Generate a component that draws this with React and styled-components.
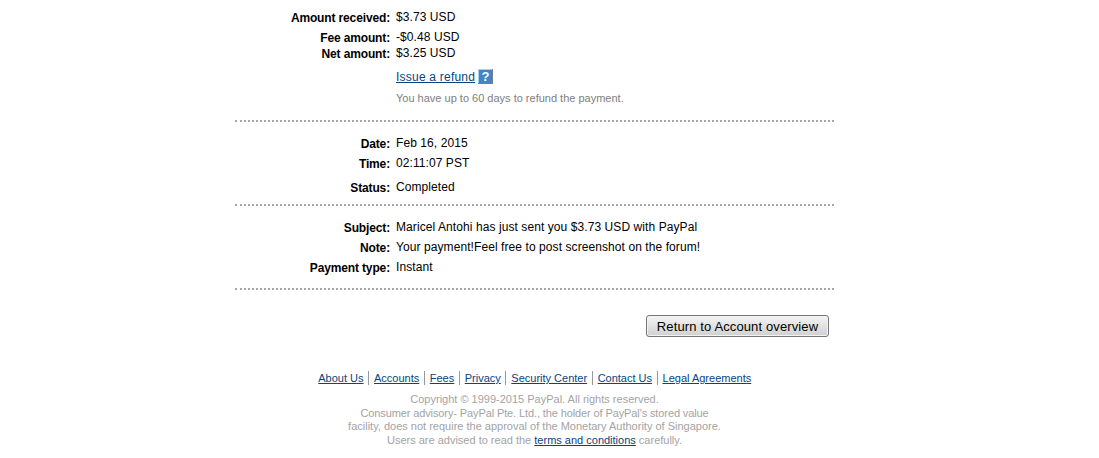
import React from 'react';
import styled, { createGlobalStyle } from 'styled-components';

const GlobalStyle = createGlobalStyle`
  html, body {
    margin: 0;
    padding: 0;
    background: #fff;
    font-family: "Liberation Sans", Arial, sans-serif;
    font-size: 12px;
    color: #000;
  }
`;

const Page = styled.div`
  width: 599px;
  margin-left: 235px;
  height: 458px;
  overflow: hidden;
`;

const Section = styled.div`
  padding-top: ${({ $top }) => $top}px;
  height: ${({ $height }) => $height}px;
  box-sizing: border-box;
  border-bottom: 2px dotted #a6a6a6;
`;

const Row = styled.div`
  display: grid;
  grid-template-columns: 155px 1fr;
  column-gap: 6px;
  height: ${({ $h }) => $h || 20}px;
  margin-top: ${({ $gap }) => $gap || 0}px;
  line-height: 14px;
`;

const Label = styled.div`
  font-weight: bold;
  text-align: right;
  padding-top: 1px;
  letter-spacing: -0.14px;
`;

const Value = styled.div`
  letter-spacing: 0.08px;
`;

const Refund = styled.a`
  display: inline-flex;
  align-items: center;
  gap: 3px;
  color: #084482;
  text-decoration: underline;
  font-size: 12px;
  letter-spacing: 0.22px;
`;

const Hint = styled.div`
  color: #808080;
  font-size: 11px;
`;

const ButtonRow = styled.div`
  display: flex;
  justify-content: flex-end;
  padding: 25px 5px 0 0;
`;

const Button = styled.button`
  width: 183px;
  height: 22px;
  padding: 0;
  border: 1px solid #777;
  border-radius: 3px;
  background: linear-gradient(#f4f4f4, #d0d0d0);
  box-shadow: inset 0 0 0 1px #f2f2f2;
  font-family: "Liberation Sans", Arial, sans-serif;
  font-size: 13px;
  letter-spacing: 0.12px;
  color: #000;
`;

const Footer = styled.div`
  margin-top: 34px;
  text-align: center;
  font-size: 11px;
  color: #a3a3a3;
`;

const FooterLinks = styled.div`
  display: flex;
  justify-content: center;
  margin-bottom: 8px;
  line-height: 14px;
`;

const FooterLink = styled.a`
  color: #084482;
  text-decoration: underline;
  padding: 0 4.5px 0 5px;
  border-left: ${({ $first }) => ($first ? 'none' : '1px solid #999')};
`;

const Legal = styled.div`
  line-height: 13.5px;
  letter-spacing: ${({ $track }) => $track || 0}px;
`;

const TermsLink = styled.a`
  color: #084482;
  text-decoration: underline;
`;

function HelpIcon() {
  return (
    <svg width="15" height="15" viewBox="0 0 15 15">
      <rect width="15" height="15" fill="#6f7f8f" />
      <rect width="14" height="14" fill="#a9cdec" />
      <rect x="1" y="1" width="13" height="13" fill="#3f86c8" />
      <text x="7.5" y="12" textAnchor="middle" fontFamily="Liberation Sans" fontWeight="bold" fontSize="13" fill="#fff">?</text>
    </svg>
  );
}

const footerLinks = ['About Us', 'Accounts', 'Fees', 'Privacy', 'Security Center', 'Contact Us', 'Legal Agreements'];

function App() {
  return (
    <Page>
      <GlobalStyle />
      <Section $top={10} $height={122}>
        <Row $h={20}><Label>Amount received:</Label><Value>$3.73 USD</Value></Row>
        <Row $h={16}><Label>Fee amount:</Label><Value>-$0.48 USD</Value></Row>
        <Row $h={16}><Label>Net amount:</Label><Value>$3.25 USD</Value></Row>
        <Row $h={21} $gap={7}>
          <span />
          <Value><Refund href="#">Issue a refund <HelpIcon /></Refund></Value>
        </Row>
        <Row $gap={1}><span /><Hint>You have up to 60 days to refund the payment.</Hint></Row>
      </Section>
      <Section $top={14} $height={84}>
        <Row $h={20}><Label>Date:</Label><Value>Feb 16, 2015</Value></Row>
        <Row $h={24}><Label>Time:</Label><Value>02:11:07 PST</Value></Row>
        <Row><Label>Status:</Label><Value>Completed</Value></Row>
      </Section>
      <Section $top={14} $height={84}>
        <Row><Label>Subject:</Label><Value>Maricel Antohi has just sent you $3.73 USD with PayPal</Value></Row>
        <Row><Label>Note:</Label><Value>Your payment!Feel free to post screenshot on the forum!</Value></Row>
        <Row><Label>Payment type:</Label><Value>Instant</Value></Row>
      </Section>
      <ButtonRow><Button>Return to Account overview</Button></ButtonRow>
      <Footer>
        <FooterLinks>
          {footerLinks.map((l, i) => (
            <FooterLink key={l} href="#" $first={i === 0}>{l}</FooterLink>
          ))}
        </FooterLinks>
        <Legal>Copyright © 1999-2015 PayPal. All rights reserved.</Legal>
        <Legal $track={-0.11}>Consumer advisory- PayPal Pte. Ltd., the holder of PayPal's stored value</Legal>
        <Legal>facility, does not require the approval of the Monetary Authority of Singapore.</Legal>
        <Legal>Users are advised to read the <TermsLink href="#">terms and conditions</TermsLink> carefully.</Legal>
      </Footer>
    </Page>
  );
}

export default App;
